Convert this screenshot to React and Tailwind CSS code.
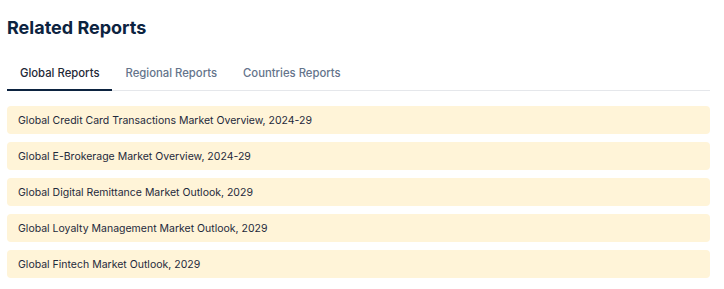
export default function App() {
  const items = [
    "Global Credit Card Transactions Market Overview, 2024-29",
    "Global E-Brokerage Market Overview, 2024-29",
    "Global Digital Remittance Market Outlook, 2029",
    "Global Loyalty Management Market Outlook, 2029",
    "Global Fintech Market Outlook, 2029",
  ];
  return (
    <div className="w-[724px] h-[289px] bg-white px-[7px] pt-[16px]" style={{ fontFamily: "Inter, 'Liberation Sans', sans-serif" }}>
      <h2 className="text-[18px] leading-[24px] font-bold text-[#0c2340] w-[703px]">Related Reports</h2>
      <div className="mt-[18px] w-[703px] flex border-b border-[#e5e7eb]">
        <div className="px-[13px] pt-[7px] pb-[8px] text-[11.3px] leading-[16px] font-medium text-[#1f2937] border-b-2 border-[#0c2340] -mb-px">Global Reports</div>
        <div className="px-[13px] pt-[7px] pb-[8px] text-[11.3px] leading-[16px] font-medium text-[#64748b]">Regional Reports</div>
        <div className="px-[13px] pt-[7px] pb-[8px] text-[11.3px] leading-[16px] font-medium text-[#64748b]">Countries Reports</div>
      </div>
      <div className="mt-[15px] w-[703px] flex flex-col gap-[8px]">
        {items.map((t) => (
          <div key={t} className="h-[28px] flex items-center px-[11px] pt-[1px] rounded-[4px] bg-[#fff4d8] text-[10.5px] text-[#1e293b]">{t}</div>
        ))}
      </div>
    </div>
  );
}
